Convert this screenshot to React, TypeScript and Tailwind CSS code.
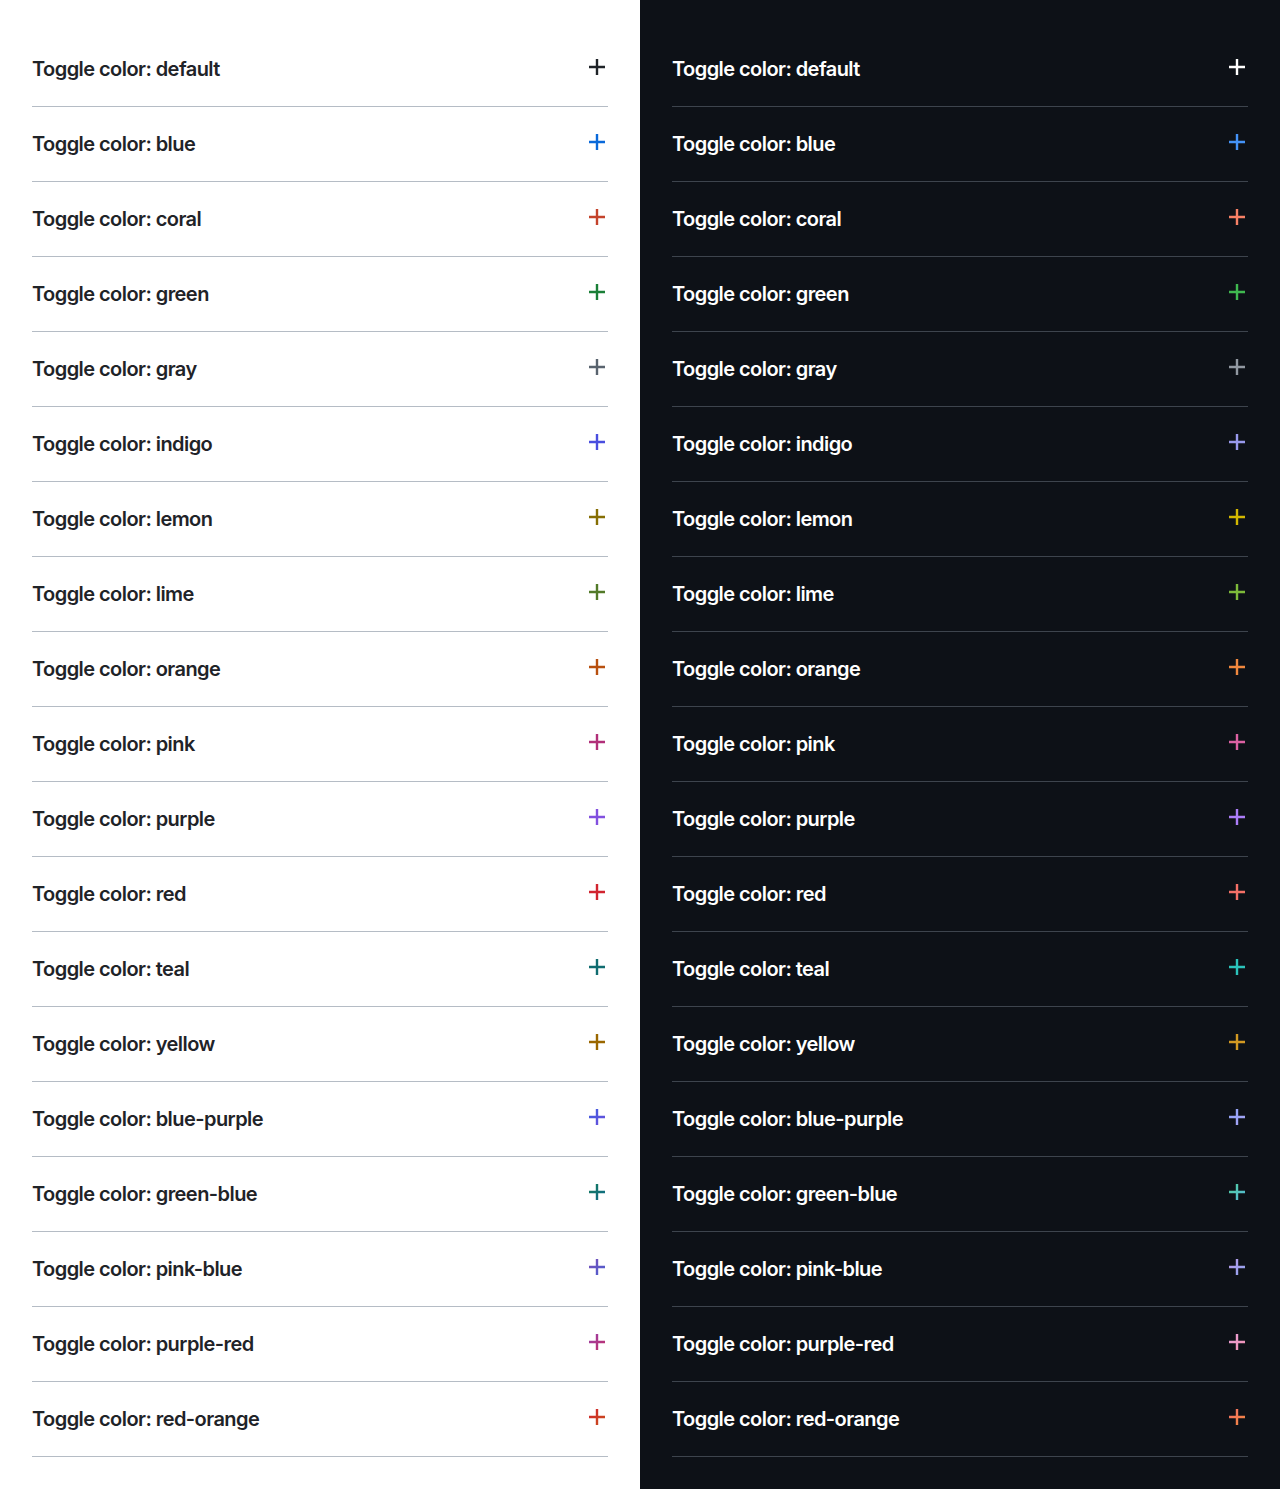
const toggles: { name: string; light: [string, string]; dark: [string, string] }[] = [
  { name: "default", light: ["#1f2328", "#1f2328"], dark: ["#ffffff", "#ffffff"] },
  { name: "blue", light: ["#0969da", "#0969da"], dark: ["#4493f8", "#4493f8"] },
  { name: "coral", light: ["#c4432b", "#c4432b"], dark: ["#f78166", "#f78166"] },
  { name: "green", light: ["#1a7f37", "#1a7f37"], dark: ["#3fb950", "#3fb950"] },
  { name: "gray", light: ["#59636e", "#59636e"], dark: ["#9198a1", "#9198a1"] },
  { name: "indigo", light: ["#494edf", "#494edf"], dark: ["#9899ec", "#9899ec"] },
  { name: "lemon", light: ["#866e04", "#866e04"], dark: ["#d3b801", "#d3b801"] },
  { name: "lime", light: ["#527a29", "#527a29"], dark: ["#7dba3a", "#7dba3a"] },
  { name: "orange", light: ["#b8500f", "#b8500f"], dark: ["#f0883e", "#f0883e"] },
  { name: "pink", light: ["#b12f79", "#b12f79"], dark: ["#db61a2", "#db61a2"] },
  { name: "purple", light: ["#8250df", "#8250df"], dark: ["#ab7df8", "#ab7df8"] },
  { name: "red", light: ["#d1242f", "#d1242f"], dark: ["#f47067", "#f47067"] },
  { name: "teal", light: ["#106c70", "#106c70"], dark: ["#2bc3bb", "#2bc3bb"] },
  { name: "yellow", light: ["#9a6700", "#9a6700"], dark: ["#d29922", "#d29922"] },
  { name: "blue-purple", light: ["#3e5ee0", "#6a4edb"], dark: ["#8fa4f8", "#a7a4f4"] },
  { name: "green-blue", light: ["#137a5c", "#106a8a"], dark: ["#4fcf9f", "#56b8d8"] },
  { name: "pink-blue", light: ["#7a4fb8", "#4a5ed0"], dark: ["#b89be8", "#8fa4f0"] },
  { name: "purple-red", light: ["#9a3fa8", "#c0306a"], dark: ["#e8a0d8", "#f090b0"] },
  { name: "red-orange", light: ["#d1242f", "#c8501a"], dark: ["#f47067", "#f0883e"] },
];

function PlusIcon({ id, colors }: { id: string; colors: [string, string] }) {
  return (
    <svg width="16" height="16" viewBox="0 0 16 16" className="mr-[3px] mb-1 shrink-0">
      <defs>
        <linearGradient id={id} x1="0" y1="0" x2="16" y2="16" gradientUnits="userSpaceOnUse">
          <stop offset="0" stopColor={colors[0]} />
          <stop offset="1" stopColor={colors[1]} />
        </linearGradient>
      </defs>
      <path d="M8 0v16M0 8h16" stroke={`url(#${id})`} strokeWidth="2.4" fill="none" />
    </svg>
  );
}

function Panel({ dark }: { dark: boolean }) {
  return (
    <div className={dark ? "bg-[#0d1117] p-8" : "bg-white p-8"}>
      {toggles.map((t) => (
        <div
          key={t.name}
          className={
            dark
              ? "flex h-[75px] items-center justify-between border-b border-[#3d444d]"
              : "flex h-[75px] items-center justify-between border-b border-[#b5bcc5]"
          }
        >
          <span
            className={
              dark
                ? "text-[20px] font-semibold tracking-[-0.028em] text-white"
                : "text-[20px] font-semibold tracking-[-0.028em] text-[#1f2328]"
            }
          >
            Toggle color: {t.name}
          </span>
          <PlusIcon id={`${dark ? "d" : "l"}-${t.name}`} colors={dark ? t.dark : t.light} />
        </div>
      ))}
    </div>
  );
}

export default function App() {
  return (
    <div className="grid w-[1280px] grid-cols-2 font-['Inter','Liberation_Sans',sans-serif]">
      <Panel dark={false} />
      <Panel dark />
    </div>
  );
}
